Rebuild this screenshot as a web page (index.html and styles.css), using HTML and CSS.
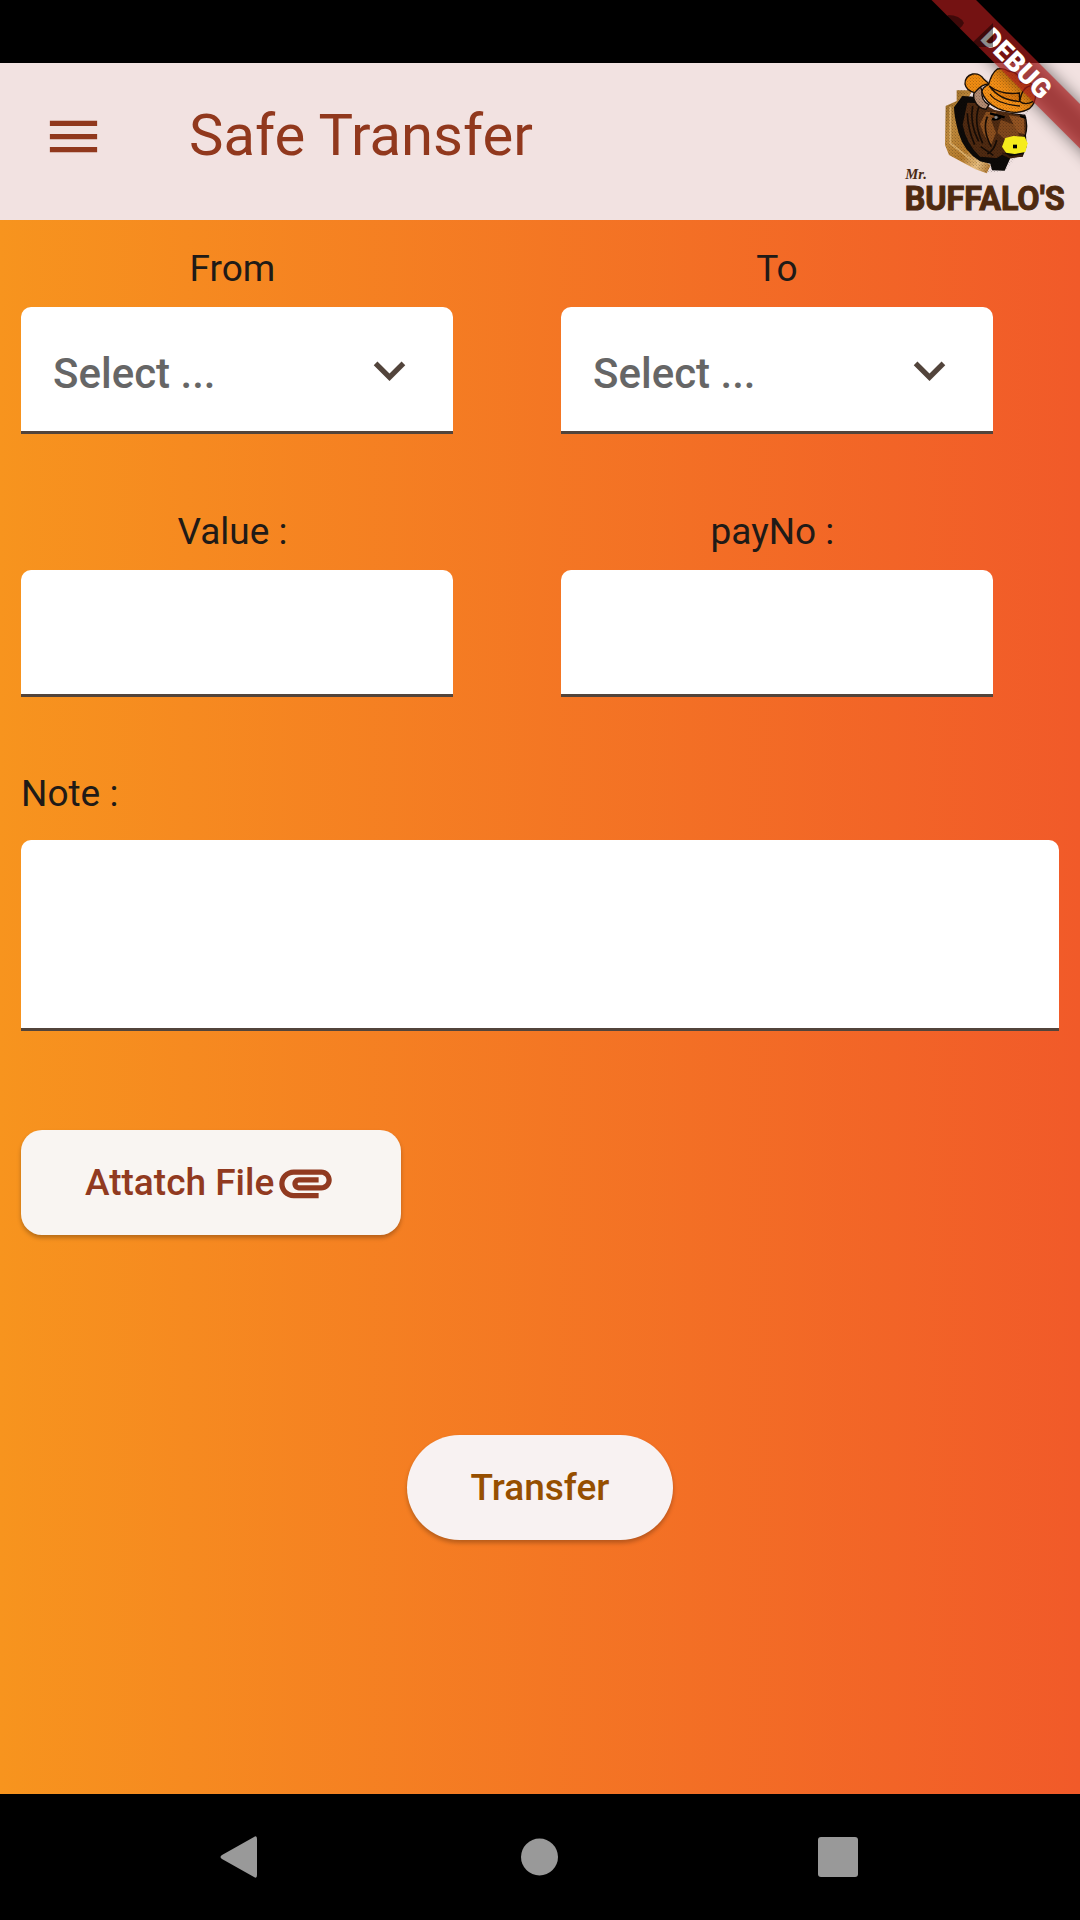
FILE: index.html
```html
<!DOCTYPE html>
<html lang="en">
<head>
<meta charset="utf-8">
<meta name="viewport" content="width=device-width, initial-scale=1">
<title>Safe Transfer</title>
<link rel="stylesheet" href="styles.css">
</head>
<body>
<div class="screen">
  <div class="status-bar"></div>

  <header class="app-bar">
    <button class="menu-button" type="button" aria-label="Open menu">
      <svg class="icon" viewBox="0 0 24 24"><path d="M3 18h18v-2H3v2zm0-5h18v-2H3v2zm0-7v2h18V6H3z"/></svg>
    </button>
    <h1 class="title">Safe Transfer</h1>
    <svg class="logo" viewBox="60 189 540 471" role="img" aria-label="Mr. Buffalo's">
      <defs>
        <linearGradient id="wood" x1="0" y1="0" x2="1" y2="1">
          <stop offset="0" stop-color="#8f6220"/><stop offset=".3" stop-color="#c08a3c"/>
          <stop offset=".6" stop-color="#b67b2c"/><stop offset=".8" stop-color="#e9c083"/><stop offset="1" stop-color="#a5691f"/>
        </linearGradient>
        <pattern id="dither" width="9" height="9" patternUnits="userSpaceOnUse">
          <path d="M0 0h3v3H0zM5 5h3v3H5z" fill="#000" opacity=".22"/>
        </pattern>
      </defs>
      <path d="M230 271H277L262 300Q240 330 247 390Q260 450 332 496L320 520L286 508L207 465L195 435L197 318L230 303Z" fill="url(#wood)"/>
      <path d="M211 320V430L290 492" fill="none" stroke="#dcae68" stroke-width="6"/>
      <path d="M247 288L284 290L330 330L436 344Q447 375 438 405L440 440L428 470L392 472L374 512L336 511L331 491L300 484Q252 455 236 400Q222 350 222 322Z" fill="#0d0a08"/>
      <path d="M262 308L306 310L344 330L434 348Q442 376 435 404L424 412L372 424L376 458L350 474L300 470Q258 430 248 374Z" fill="#4f2a11"/>
      <path d="M318 336L350 336L334 362L348 398L332 438L310 400L300 372Z" fill="#8c501f"/>
      <path d="M362 360L404 374L418 408L374 418L352 398Z" fill="#80481d"/>
      <path d="M386 346L432 352L434 402L414 398Z" fill="#945422"/>
      <path d="M278 318Q268 370 296 424M296 322Q280 370 308 430M262 340Q264 390 284 434M322 350Q306 390 334 440M350 420Q344 450 322 462M302 440L340 466" fill="none" stroke="#160c06" stroke-width="5"/>
      <path d="M330 340L374 352M336 356Q348 362 362 352M420 348L438 354" fill="none" stroke="#000" stroke-width="7"/>
      <circle cx="348" cy="352" r="5" fill="#888"/>
      <path d="M366 460L390 472L428 466" fill="none" stroke="#3a1d0b" stroke-width="7"/>
      <path d="M300 257Q276 272 282 298Q292 326 318 328L327 314Q302 302 306 272Z" fill="#b48c72" stroke="#120b07" stroke-width="4"/>
      <path d="M312 238Q300 219 278 222Q254 229 255 252Q259 272 284 278Q304 252 328 252Z" fill="#f08c12" stroke="#1d1007" stroke-width="4"/>
      <path d="M326 254Q334 220 352 207Q372 203 384 213Q416 214 421 246Q450 240 466 264Q472 308 448 326Q410 348 354 326Q314 306 306 276Q306 262 326 254Z" fill="#f59016" stroke="#1d1007" stroke-width="4"/>
      <path d="M328 258Q364 286 418 279L419 304Q360 302 328 258" fill="#e27c0e" stroke="#1d1007" stroke-width="4"/>
      <path d="M419 304Q426 262 452 257M419 304Q434 318 460 304M330 282Q350 312 420 318" fill="none" stroke="#1d1007" stroke-width="4"/>
      <path d="M197 318L230 303V271H262L255 240L280 222L326 240L352 207L420 220L466 264L450 326L438 344L440 440L374 512L320 520L207 465L195 435Z" fill="url(#dither)"/>
      <path d="M376 414L400 408L434 410L443 430L436 456L404 462L378 458L366 440Z" fill="#f6ec1c"/>
      <path d="M399 434h12v11h-12z" fill="#000"/>
      <text class="logo-mr" x="76" y="536">Mr.</text>
      <text class="logo-name" x="74" y="629">BUFFALO'S</text>
    </svg>
  </header>

  <main class="content">
    <form class="transfer-form">
      <div class="field-grid">
        <div class="field">
          <label class="label" for="from">From&nbsp;</label>
          <div class="select-box">
            <select class="input select" id="from"><option>Select ...</option></select>
            <svg class="icon chevron" viewBox="0 0 24 24"><path d="M7.41 8.59L12 13.17l4.59-4.58L18 10l-6 6-6-6z"/></svg>
          </div>
        </div>
        <div class="field">
          <label class="label" for="to">To</label>
          <div class="select-box">
            <select class="input select" id="to"><option>Select ...</option></select>
            <svg class="icon chevron" viewBox="0 0 24 24"><path d="M7.41 8.59L12 13.17l4.59-4.58L18 10l-6 6-6-6z"/></svg>
          </div>
        </div>
        <div class="field">
          <label class="label" for="value">Value :&nbsp;</label>
          <input class="input" id="value" type="text">
        </div>
        <div class="field">
          <label class="label" for="payno">payNo :&nbsp;</label>
          <input class="input" id="payno" type="text">
        </div>
      </div>
      <div class="note">
        <label class="label note-label" for="note">Note :</label>
        <textarea class="input note-input" id="note"></textarea>
      </div>
      <button class="button attach" type="button">Attatch File<svg class="icon" viewBox="0 0 24 24"><path d="M2 12.5C2 9.46 4.46 7 7.5 7H18c2.21 0 4 1.79 4 4s-1.79 4-4 4H9.5C8.12 15 7 13.88 7 12.5S8.12 10 9.5 10H17v2H9.41c-.55 0-.55 1 0 1H18c1.1 0 2-.9 2-2s-.9-2-2-2H7.5C5.57 9 4 10.57 4 12.5S5.57 16 7.5 16H17v2H7.5C4.46 18 2 15.54 2 12.5z"/></svg></button>
      <button class="button submit" type="submit">Transfer</button>
    </form>
  </main>

  <nav class="nav-bar" aria-label="System navigation">
    <button class="nav-button" type="button" aria-label="Back">
      <svg class="nav-icon" viewBox="0 0 42 42"><path d="M2 19L34 1Q37-1 37 3V39Q37 43 34 41L2 23Q-1 21 2 19Z"/></svg>
    </button>
    <button class="nav-button" type="button" aria-label="Home">
      <svg class="nav-icon" viewBox="0 0 42 42"><circle cx="20.5" cy="21" r="18.5"/></svg>
    </button>
    <button class="nav-button" type="button" aria-label="Recent apps">
      <svg class="nav-icon" viewBox="0 0 42 42"><rect x="0" y="1" width="40" height="40" rx="3"/></svg>
    </button>
  </nav>

  <svg class="debug-banner" viewBox="0 0 200 200">
    <g transform="translate(200 0) rotate(45)">
      <rect class="ribbon-shadow" x="-160" y="73.5" width="320" height="31.5"/>
      <rect class="ribbon" x="-160" y="73.5" width="320" height="31.5"/>
      <text class="ribbon-text" x="0" y="99">DEBUG</text>
    </g>
    <path class="status-glyph" d="M68 15Q80 15 84 23Q81 29 77 29L66 18ZM113 23V47H97L92 43Z"/>
  </svg>
</div>
</body>
</html>
```

FILE: styles.css
```css
* {
  box-sizing: border-box;
}

body {
  margin: 0;
  font-family: Roboto, "Liberation Sans", sans-serif;
}

button,
input,
select,
textarea {
  margin: 0;
  border: 0;
  font: inherit;
}

.screen {
  position: relative;
  display: flex;
  flex-direction: column;
  min-height: 100vh;
  overflow: hidden;
  background: #000;
}

.icon {
  display: block;
  width: 63px;
  height: 63px;
  fill: currentColor;
}

.status-bar {
  height: 63px;
}

.app-bar {
  display: flex;
  align-items: flex-start;
  background: #f2e2e1;
  color: #91381d;
}

.menu-button {
  display: flex;
  align-items: center;
  width: 147px;
  height: 147px;
  padding: 0 42px;
  background: none;
  color: inherit;
}

.title {
  flex: 1;
  margin: 0;
  padding-left: 42px;
  font-size: 58px;
  font-weight: 400;
  line-height: 145px;
}

.logo {
  display: block;
  width: 180px;
  height: 157px;
}

.logo-mr {
  fill: #4a2a14;
  font: italic 700 44px "Liberation Serif", serif;
}

.logo-name {
  fill: #4f2a10;
  stroke: #4f2a10;
  stroke-width: 3px;
  font: 700 97px "Liberation Sans Narrow", Roboto, sans-serif;
}

.content {
  flex: 1;
  padding: 27px 0;
  background: linear-gradient(to right, #f7941e, #f15a29);
}

.transfer-form {
  display: flex;
  flex-direction: column;
}

.field-grid {
  display: grid;
  grid-template-columns: 1fr 1fr;
  row-gap: 76px;
}

.field {
  display: flex;
  flex-direction: column;
  gap: 16px;
  width: 80%;
  margin-left: 21px;
}

.label {
  color: #201a17;
  font-size: 37px;
  line-height: 44px;
  text-align: center;
}

.input {
  display: block;
  width: 100%;
  height: 127px;
  padding: 0 32px;
  border-bottom: 3px solid #52443b;
  border-radius: 10px 10px 0 0;
  background: #fff;
  color: #201a17;
  font-size: 42px;
}

.select-box {
  display: grid;
  align-items: center;
}

.select-box > * {
  grid-area: 1 / 1;
}

.select {
  appearance: none;
  padding-top: 8px;
  color: #666;
  font-weight: 500;
}

.chevron {
  justify-self: end;
  margin-right: 32px;
  color: #52443b;
  pointer-events: none;
}

.note {
  display: flex;
  flex-direction: column;
  gap: 24px;
  margin: 75px 21px 0;
}

.note-label {
  text-align: left;
}

.note-input {
  height: 191px;
  padding: 32px;
  resize: none;
}

.button {
  display: flex;
  align-items: center;
  height: 105px;
  padding: 0 64px;
  box-shadow: 0 3px 4px rgba(0, 0, 0, 0.25);
  font-size: 37px;
  font-weight: 500;
}

.attach {
  align-self: flex-start;
  margin: 99px 21px 0;
  border-radius: 21px;
  background: #f9f5f2;
  color: #913a20;
}

.submit {
  align-self: center;
  margin-top: 200px;
  border-radius: 53px;
  background: #f8f2f2;
  color: #964f00;
}

.nav-bar {
  display: flex;
  justify-content: center;
  gap: 173px;
  padding: 0 100px;
}

.nav-button {
  display: flex;
  align-items: center;
  justify-content: center;
  width: 126px;
  height: 126px;
  padding: 0;
  background: none;
}

.nav-icon {
  width: 42px;
  height: 42px;
  overflow: visible;
  fill: #999;
}

.debug-banner {
  position: absolute;
  top: 0;
  right: 0;
  width: 200px;
  height: 200px;
  pointer-events: none;
}

.ribbon {
  fill: rgba(183, 28, 28, 0.63);
}

.ribbon-shadow {
  fill: rgba(0, 0, 0, 0.5);
  filter: blur(8px);
}

.ribbon-text {
  fill: #fff;
  font: 900 27px Roboto, sans-serif;
  text-anchor: middle;
}

.status-glyph {
  fill: rgba(0, 0, 0, 0.45);
}
```
